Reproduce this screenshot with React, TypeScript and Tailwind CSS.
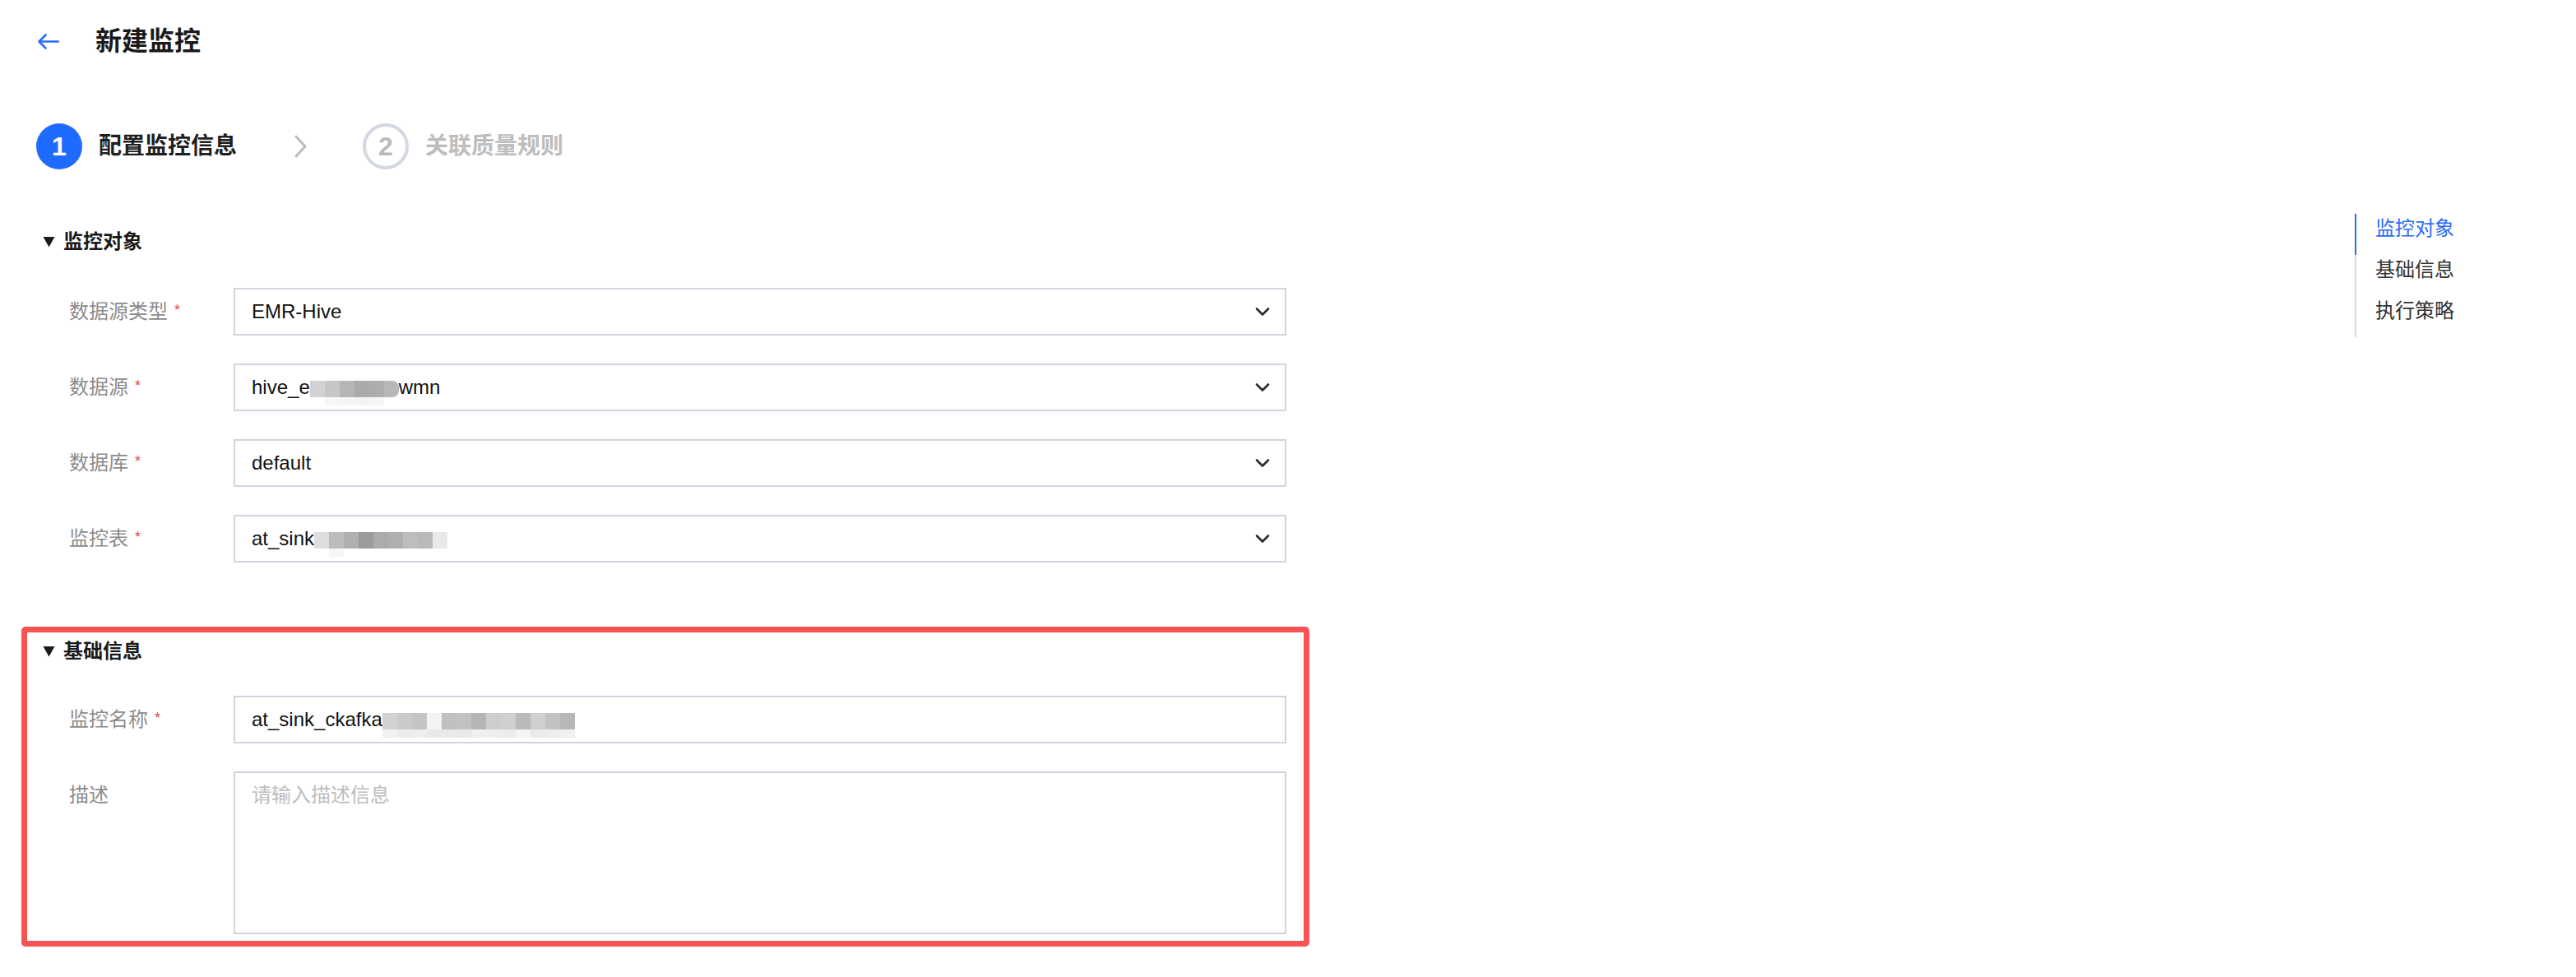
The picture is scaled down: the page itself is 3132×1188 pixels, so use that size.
import type React from "react";

type FieldRow = {
	label: string;
	required?: boolean;
	kind: "select" | "input" | "textarea";
	value?: React.ReactNode;
	placeholder?: string;
};

// redacted bits of the screenshot, drawn as a two-row mosaic
const Mosaic = ({ top, bottom }: { top: string[]; bottom: string[] }) => (
	<span className="flex flex-col mt-[14px]">
		<span className="flex h-[20px]">
			{top.map((c, i) => (
				<span key={i} className={`w-[18px] h-full ${c}`} />
			))}
		</span>
		<span className="flex h-[10px]">
			{bottom.map((c, i) => (
				<span key={i} className={`w-[18px] h-full ${c}`} />
			))}
		</span>
	</span>
);

const ChevronDown = () => (
	<svg width="18" height="12" viewBox="0 0 18 12" fill="none">
		<path
			d="M2 2.5l7 7 7-7"
			stroke="#2b2b2b"
			strokeWidth="2.6"
			strokeLinecap="round"
			strokeLinejoin="round"
		/>
	</svg>
);

const Field = ({ row }: { row: FieldRow }) => (
	<div className="flex items-start">
		<div className="w-[232px] pl-[32px] h-[58px] flex items-center text-[24px] leading-[32px] text-[#8c8c8c]">
			<span>{row.label}</span>
			{row.required && (
				<span className="ml-[8px] text-[18px] text-[#e5484d] -mt-[4px]">*</span>
			)}
		</div>
		{row.kind === "textarea" ? (
			<textarea
				readOnly
				placeholder={row.placeholder}
				className="w-[1280px] h-[198px] border-2 border-[#cfd5de] bg-white px-[20px] py-[11px] text-[24px] leading-[32px] text-[#1a1a1a] placeholder:text-[#bdbdbd] resize-none outline-none"
			/>
		) : (
			<div className="w-[1280px] h-[58px] border-2 border-[#cfd5de] bg-white flex items-center pl-[20px] pr-[18px]">
				<div className="flex-1 flex items-center text-[24px] leading-[32px] text-[#111]">
					{row.value}
				</div>
				{row.kind === "select" && <ChevronDown />}
			</div>
		)}
	</div>
);

const Section = ({
	title,
	rows,
	highlighted,
	fieldsGap,
}: {
	title: string;
	rows: FieldRow[];
	highlighted?: boolean;
	fieldsGap: string;
}) => (
	<section
		className={`w-[1566px] border-[7px] rounded-[5px] pl-[19px] pr-[21px] pt-[7px] pb-[8px] ${
			highlighted ? "border-[#f95252]" : "border-transparent"
		}`}
	>
		<div className="flex items-center h-[32px]">
			<svg width="15" height="14" viewBox="0 0 15 14" className="mr-[10px]">
				<path d="M0.5 1h14L7.5 13.5z" fill="#1a1a1a" />
			</svg>
			<span className="text-[24px] leading-[32px] font-bold text-[#1a1a1a]">
				{title}
			</span>
		</div>
		<div className={`flex flex-col gap-[34px] ${fieldsGap}`}>
			{rows.map((r) => (
				<Field key={r.label} row={r} />
			))}
		</div>
	</section>
);

const objectRows: FieldRow[] = [
	{ label: "数据源类型", required: true, kind: "select", value: "EMR-Hive" },
	{
		label: "数据源",
		required: true,
		kind: "select",
		value: (
			<>
				<span>hive_e</span>
				<Mosaic
					top={[
						"bg-[#d2d2d2]",
						"bg-[#c6c6c6]",
						"bg-[#b6b6b6]",
						"bg-[#aaaaaa]",
						"bg-[#adadad]",
						"bg-[#b7b7b7] rounded-r-[8px]",
					]}
					bottom={[
						"bg-white",
						"bg-[#f7f7f7]",
						"bg-[#f5f5f5]",
						"bg-[#f3f3f3]",
						"bg-[#f6f6f6]",
						"bg-white",
					]}
				/>
				<span>wmn</span>
			</>
		),
	},
	{ label: "数据库", required: true, kind: "select", value: "default" },
	{
		label: "监控表",
		required: true,
		kind: "select",
		value: (
			<>
				<span>at_sink</span>
				<Mosaic
					top={[
						"bg-[#dedede]",
						"bg-[#bcbcbc]",
						"bg-[#b0b0b0]",
						"bg-[#9b9b9b]",
						"bg-[#ababab]",
						"bg-[#afafaf]",
						"bg-[#bdbdbd]",
						"bg-[#b9b9b9]",
						"bg-[#e9e9e9]",
					]}
					bottom={[
						"bg-white",
						"bg-[#f6f6f6]",
						"bg-white",
						"bg-white",
						"bg-white",
						"bg-white",
						"bg-white",
						"bg-white",
						"bg-white",
					]}
				/>
			</>
		),
	},
];

const basicRows: FieldRow[] = [
	{
		label: "监控名称",
		required: true,
		kind: "input",
		value: (
			<>
				<span>at_sink_ckafka</span>
				<Mosaic
					top={[
						"bg-[#d2d2d2]",
						"bg-[#cacaca]",
						"bg-[#c4c4c4]",
						"bg-[#f3f3f3]",
						"bg-[#c0c0c0]",
						"bg-[#c2c2c2]",
						"bg-[#b5b5b5]",
						"bg-[#cdcdcd]",
						"bg-[#d0d0d0]",
						"bg-[#bababa]",
						"bg-[#cfcfcf]",
						"bg-[#c2c2c2]",
						"bg-[#b8b8b8]",
					]}
					bottom={[
						"bg-[#f1f1f1]",
						"bg-[#ececec]",
						"bg-[#eeeeee]",
						"bg-[#e9e9e9]",
						"bg-[#eaeaea]",
						"bg-[#e8e8e8]",
						"bg-[#f0f0f0]",
						"bg-[#eeeeee]",
						"bg-[#ececec]",
						"bg-[#f4f4f4]",
						"bg-[#ebebeb]",
						"bg-[#ededed]",
						"bg-[#f0f0f0]",
					]}
				/>
			</>
		),
	},
	{ label: "描述", kind: "textarea", placeholder: "请输入描述信息" },
];

const navItems = ["监控对象", "基础信息", "执行策略"];

const App: React.FC = () => {
	return (
		<div className="w-[3132px] min-h-[1188px] bg-white font-['Liberation_Sans','Noto_Sans_CJK_SC',sans-serif] text-[#1a1a1a]">
			{/* header */}
			<div className="h-[100px] flex items-center pl-[45px] gap-[44px]">
				<svg width="27" height="19" viewBox="0 0 27 19" fill="none">
					<path
						d="M26 9.5H2.5M10.5 1.5l-8 8 8 8"
						stroke="#2a6df6"
						strokeWidth="2.6"
						strokeLinecap="round"
						strokeLinejoin="round"
					/>
				</svg>
				<h1 className="text-[32px] leading-[40px] font-bold">新建监控</h1>
			</div>

			{/* steps */}
			<div className="mt-[50px] h-[56px] pl-[44px] flex items-center">
				<div className="w-[56px] h-[56px] rounded-full bg-[#1f6bff] flex items-center justify-center text-white text-[32px] font-bold">
					1
				</div>
				<span className="ml-[20px] text-[28px] leading-[36px] font-bold text-[#1f1f1f]">
					配置监控信息
				</span>
				<svg
					width="17"
					height="28"
					viewBox="0 0 17 28"
					fill="none"
					className="ml-[69px]"
				>
					<path
						d="M3 2l11 12L3 26"
						stroke="#bdbdbd"
						strokeWidth="3"
						strokeLinecap="round"
						strokeLinejoin="round"
					/>
				</svg>
				<div className="ml-[67px] w-[56px] h-[56px] rounded-full border-[4px] border-[#d3d8e1] flex items-center justify-center text-[#bababa] text-[32px] font-bold">
					2
				</div>
				<span className="ml-[20px] text-[28px] leading-[36px] font-bold text-[#bdbdbd]">
					关联质量规则
				</span>
			</div>

			{/* body */}
			<div className="flex">
				<div className="pl-[26px] pt-[58px] flex flex-col gap-[63px]">
					<Section title="监控对象" rows={objectRows} fieldsGap="mt-[40px]" />
					<Section
						title="基础信息"
						rows={basicRows}
						highlighted
						fieldsGap="mt-[38px]"
					/>
				</div>
				<nav className="ml-auto w-[269px] mt-[54px] self-start">
					{navItems.map((item, i) => (
						<div
							key={item}
							className={`h-[50px] pt-[2px] pl-[23px] border-l-2 text-[24px] leading-[32px] ${
								i === 0
									? "border-[#2a6df6] text-[#2a6df6]"
									: "border-[#dcdcdc] text-[#333]"
							}`}
						>
							{item}
						</div>
					))}
				</nav>
			</div>
		</div>
	);
};

export default App;
